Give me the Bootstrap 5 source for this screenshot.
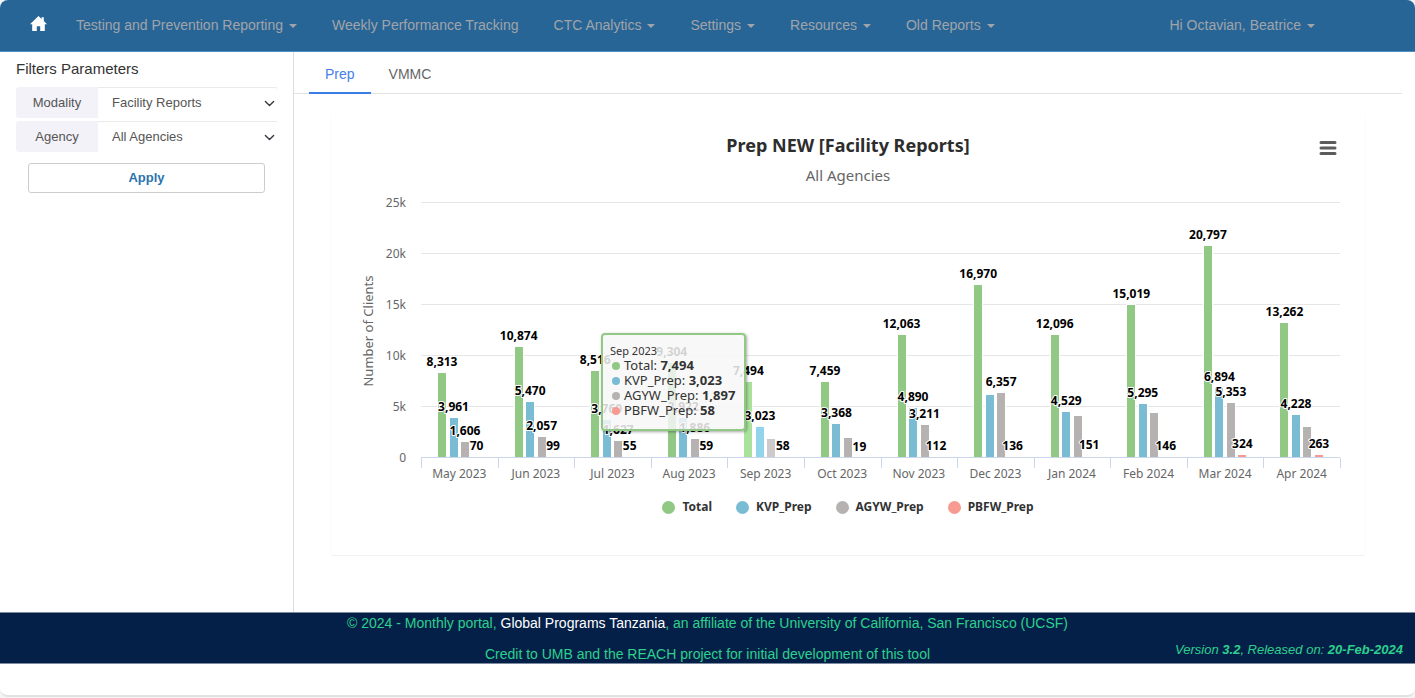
<!DOCTYPE html>
<html lang="en">
<head>
<meta charset="utf-8">
<meta name="viewport" content="width=device-width, initial-scale=1">
<title>Monthly portal - Prep</title>
<link rel="stylesheet" href="https://cdn.jsdelivr.net/npm/bootstrap@5.3.0/dist/css/bootstrap.min.css">
<style>
  body { background: #f4f4f4; font-family: "Liberation Sans", Arial, sans-serif; font-size: 14px; color: #333; }
  .page-shell { background: #fff; border-bottom: 2px solid #e2e2e2; border-radius: 8px; overflow: hidden; padding-bottom: 31px; }
  .top-nav { background: #286597; border-bottom: 1px solid #4d8fc0; padding: 0 100px 0 30px; min-height: 52px; --bs-navbar-nav-link-padding-x: 0; }
  .top-nav .navbar-nav { gap: 35px; }
  .top-nav .nav-link { color: #a0a4a8; line-height: 20px; padding: 15px 0 16px; }
  .top-nav .home-link { margin: 0 29px 4px 0; line-height: 1; }
  .top-nav .dropdown-toggle::after { border-top-width: 4px; border-left-width: 4px; border-right-width: 4px; margin-left: 6px; vertical-align: 2px; }
  .filters { flex: 0 0 294px; border-right: 1px solid #ddd; padding: 7px 15px 0 16px; }
  .filters h2 { font-size: 15px; line-height: 20px; margin: 0 0 8px; color: #333; font-weight: 400; }
  .filter-row { height: 31px; margin-bottom: 3px; font-size: 13px; }
  .filter-row label { width: 82px; background: #f3f2f8; border-radius: 3px 0 0 3px; color: #555; }
  .filter-row .form-select { flex: 1; border: 0; border-top: 1px solid #ebebeb; border-radius: 0 3px 3px 0; font-size: 13px; color: #555; padding: 0 28px 0 14px; background-size: 11px 11px; background-position: right 3px center; }
  .btn-apply { margin: 8px 13px 0 12px; border: 1px solid #ccc; border-radius: 3px; color: #2a72ae; font-size: 13px; font-weight: 700; line-height: 18px; padding: 5px; }
  .report-tabs { margin-right: 13px; padding-left: 15px; border-bottom: 1px solid #e2e2e2; }
  .report-tabs .nav-link { border: 0; border-bottom: 2px solid transparent; border-radius: 0; margin-bottom: -1px; padding: 12px 16px 8px; line-height: 20px; color: #666; width: auto; }
  .report-tabs .nav-item + .nav-item .nav-link { padding-left: 18px; }
  .report-tabs .nav-link.active { color: #4680e8; border-color: #3b7de8; background: none; }
  .chart-panel { margin: 20px 49px 56px 36px; border: 1px solid #fbfbfb; border-top: 0; border-bottom-color: #f2f2f2; border-radius: 4px; padding: 16px 0 38px; font-family: "Noto Sans", "Open Sans", sans-serif; }
  .chart-panel h1 { font-size: 18px; font-weight: 700; line-height: 30px; margin: 0; color: #2d2d2d; text-align: center; }
  .chart-panel h3 { font-size: 15px; font-weight: 400; line-height: 30px; margin: 0; color: #666; text-align: center; }
  .chart-menu { right: 24px; top: 22px; padding: 4px; border: 0; background: none; line-height: 0; }
  .chart-area svg { display: block; width: 100%; height: 295px; font-size: 12px; fill: #666; }
  .chart-area .axis-name { font-size: 13px; }
  .bar-value { font-weight: 700; fill: #000; stroke: #fff; stroke-width: 2px; stroke-linejoin: round; paint-order: stroke; }
  .chart-tip { width: 145px; padding: 8px 7px 11px; border: 2px solid #90c884; border-radius: 4px; background: rgba(247,247,247,.85); box-shadow: 1px 1px 3px rgba(0,0,0,.35); font-size: 13px; line-height: 15px; color: #333; white-space: nowrap; }
  .chart-tip .tip-head { font-size: 11px; line-height: 15px; }
  .tip-dot { display: inline-block; width: 8px; height: 8px; border-radius: 50%; margin: 0 4px 0 2px; }
  .chart-key { gap: 24px; margin-top: 12px; font-size: 12px; font-weight: 700; line-height: 20px; color: #333; }
  .key-dot { width: 13px; height: 13px; border-radius: 50%; margin-right: 7px; }
  .site-footer { background: #052048; border-top: 1px solid #7d8ba0; border-bottom: 1px solid #7d8ba0; color: #2dd08d; }
  .site-footer p { line-height: 20px; margin: 0 0 11px; }
  .site-footer p:nth-child(2) { margin-bottom: -1px; }
  .site-footer a { color: #fff; text-decoration: none; }
  .site-version { right: 12px; bottom: 3px; font-size: 13px; font-style: italic; line-height: 20px; }
</style>
</head>
<body>
<div class="page-shell">
  <nav class="navbar navbar-expand top-nav">
    <a class="home-link" href="#" aria-label="Home">
      <svg width="17" height="16" viewBox="0 0 17 16" fill="#fff"><path d="M8.5 0 0 8.2h2.2V15h4.6v-4.8h3.4V15h4.6V8.2H17l-3.2-3.1V1.2h-2.2V3z"/></svg>
    </a>
    <ul class="navbar-nav flex-grow-1">
      <li class="nav-item"><a class="nav-link dropdown-toggle" href="#">Testing and Prevention Reporting</a></li>
      <li class="nav-item"><a class="nav-link" href="#">Weekly Performance Tracking</a></li>
      <li class="nav-item"><a class="nav-link dropdown-toggle" href="#">CTC Analytics</a></li>
      <li class="nav-item"><a class="nav-link dropdown-toggle" href="#">Settings</a></li>
      <li class="nav-item"><a class="nav-link dropdown-toggle" href="#">Resources</a></li>
      <li class="nav-item"><a class="nav-link dropdown-toggle" href="#">Old Reports</a></li>
      <li class="nav-item ms-auto"><a class="nav-link dropdown-toggle" href="#">Hi Octavian, Beatrice</a></li>
    </ul>
  </nav>

  <div class="d-flex">
    <aside class="filters">
      <h2>Filters Parameters</h2>
      <form>
        <div class="filter-row d-flex">
          <label class="d-flex align-items-center justify-content-center" for="modality">Modality</label>
          <select class="form-select" id="modality"><option>Facility Reports</option></select>
        </div>
        <div class="filter-row d-flex">
          <label class="d-flex align-items-center justify-content-center" for="agency">Agency</label>
          <select class="form-select" id="agency"><option>All Agencies</option></select>
        </div>
        <div class="d-grid"><button class="btn btn-apply" type="button">Apply</button></div>
      </form>
    </aside>

    <main class="flex-grow-1">
      <ul class="nav nav-tabs report-tabs">
        <li class="nav-item"><a class="nav-link active" href="#">Prep</a></li>
        <li class="nav-item"><a class="nav-link" href="#">VMMC</a></li>
      </ul>
      <section class="chart-panel position-relative">
        <h1>Prep NEW [Facility Reports]</h1>
        <h3>All Agencies</h3>
        <button class="chart-menu position-absolute" type="button" aria-label="Chart menu">
          <svg width="18" height="16" stroke="#5c5c5c" stroke-width="3" stroke-linecap="round"><path d="M2 2.5h14M2 8h14M2 13.5h14"/></svg>
        </button>
        <div class="chart-area position-relative" id="chart">
          <svg role="img" aria-label="Number of clients by month"></svg>
          <div class="chart-tip position-absolute">
            <div class="tip-head">Sep 2023</div>
            <div><span class="tip-dot" style="background:#90c884"></span>Total: <b>7,494</b></div>
            <div><span class="tip-dot" style="background:#7abcd4"></span>KVP_Prep: <b>3,023</b></div>
            <div><span class="tip-dot" style="background:#b6b2b2"></span>AGYW_Prep: <b>1,897</b></div>
            <div><span class="tip-dot" style="background:#f79a92"></span>PBFW_Prep: <b>58</b></div>
          </div>
        </div>
        <div class="chart-key d-flex justify-content-center">
          <span class="d-flex align-items-center"><i class="key-dot" style="background:#90c884"></i>Total</span>
          <span class="d-flex align-items-center"><i class="key-dot" style="background:#7abcd4"></i>KVP_Prep</span>
          <span class="d-flex align-items-center"><i class="key-dot" style="background:#b6b2b2"></i>AGYW_Prep</span>
          <span class="d-flex align-items-center"><i class="key-dot" style="background:#f79a92"></i>PBFW_Prep</span>
        </div>
      </section>
    </main>
  </div>

  <footer class="site-footer position-relative text-center">
    <p>© 2024 - Monthly portal, <a href="#">Global Programs Tanzania</a>, an affiliate of the University of California, San Francisco (UCSF)</p>
    <p>Credit to UMB and the REACH project for initial development of this tool</p>
    <div class="site-version position-absolute">Version <b>3.2</b>, Released on: <b>20-Feb-2024</b></div>
  </footer>
</div>
<script src="https://cdn.jsdelivr.net/npm/bootstrap@5.3.0/dist/js/bootstrap.bundle.min.js"></script>
<script>
  // month, then Total, KVP, AGYW, PBFW; the last string flags which values get a label
  const rows = [
    ['May 2023', [8313, 3961, 1606, 70], '1111'],
    ['Jun 2023', [10874, 5470, 2057, 99], '1111'],
    ['Jul 2023', [8516, 3760, 1627, 55], '1111'],
    ['Aug 2023', [9304, 3922, 1886, 59], '1111'],
    ['Sep 2023', [7494, 3023, 1897, 58], '1101'],
    ['Oct 2023', [7459, 3368, 1950, 19], '1101'],
    ['Nov 2023', [12063, 4890, 3211, 112], '1111'],
    ['Dec 2023', [16970, 6150, 6357, 136], '1011'],
    ['Jan 2024', [12096, 4529, 4120, 151], '1101'],
    ['Feb 2024', [15019, 5295, 4420, 146], '1101'],
    ['Mar 2024', [20797, 6894, 5353, 324], '1111'],
    ['Apr 2024', [13262, 4228, 3080, 263], '1101']
  ];
  const colours = ['#90c884', '#7abcd4', '#b6b2b2', '#f79a92'];
  const hovered = ['#a9e29c', '#91d4ec', '#cecaca', '#ffb2aa'];
  const chart = document.getElementById('chart');

  function draw() {
    const width = chart.clientWidth, left = 90, right = width - 25, base = 268, scale = 255 / 25000;
    const step = (right - left) / rows.length, gap = step * 0.15;
    let grid = '', bars = '', labels = '';
    for (let k = 0; k <= 25; k += 5) {
      const y = Math.round(base - k * 1000 * scale);
      if (k) grid += `<path d="M${left} ${y - .5}H${right}" stroke="#e6e6e6"/>`;
      grid += `<text x="${left - 15}" y="${y + 4}" text-anchor="end">${k ? k + 'k' : 0}</text>`;
    }
    let ticks = `M${left} ${base - .5}H${right}`;
    for (let i = 0; i <= rows.length; i++) ticks += `M${Math.round(left + i * step) + .5} ${base}v10`;
    rows.forEach(([month, values, shown], i) => {
      const mid = left + (i + .5) * step;
      grid += `<text x="${mid}" y="288" text-anchor="middle">${month}</text>`;
      values.forEach((v, s) => {
        const x = mid + (s - 1.5) * gap, h = v * scale, fill = (i === 4 ? hovered : colours)[s];
        if (h > 2) bars += `<rect x="${Math.round(x - 5) + .5}" y="${Math.round(base - h) - .5}" width="9" height="${Math.round(h)}" fill="${fill}" stroke="#fff"/>`;
        if (shown[s] === '1') labels += `<text class="bar-value" x="${x}" y="${Math.round(base - h) - 7}" text-anchor="middle">${v.toLocaleString('en-US')}</text>`;
      });
    });
    chart.querySelector('svg').innerHTML = grid +
      `<text class="axis-name" transform="translate(42 141) rotate(-90)" text-anchor="middle">Number of Clients</text>` +
      bars + `<path d="${ticks}" stroke="#ccd6eb" fill="none"/>` + labels;
    const tip = chart.querySelector('.chart-tip');
    tip.style.left = Math.round(left + 4.5 * step - 165) + 'px';
    tip.style.top = '143px';
  }
  draw();
  addEventListener('resize', draw);
</script>
</body>
</html>
